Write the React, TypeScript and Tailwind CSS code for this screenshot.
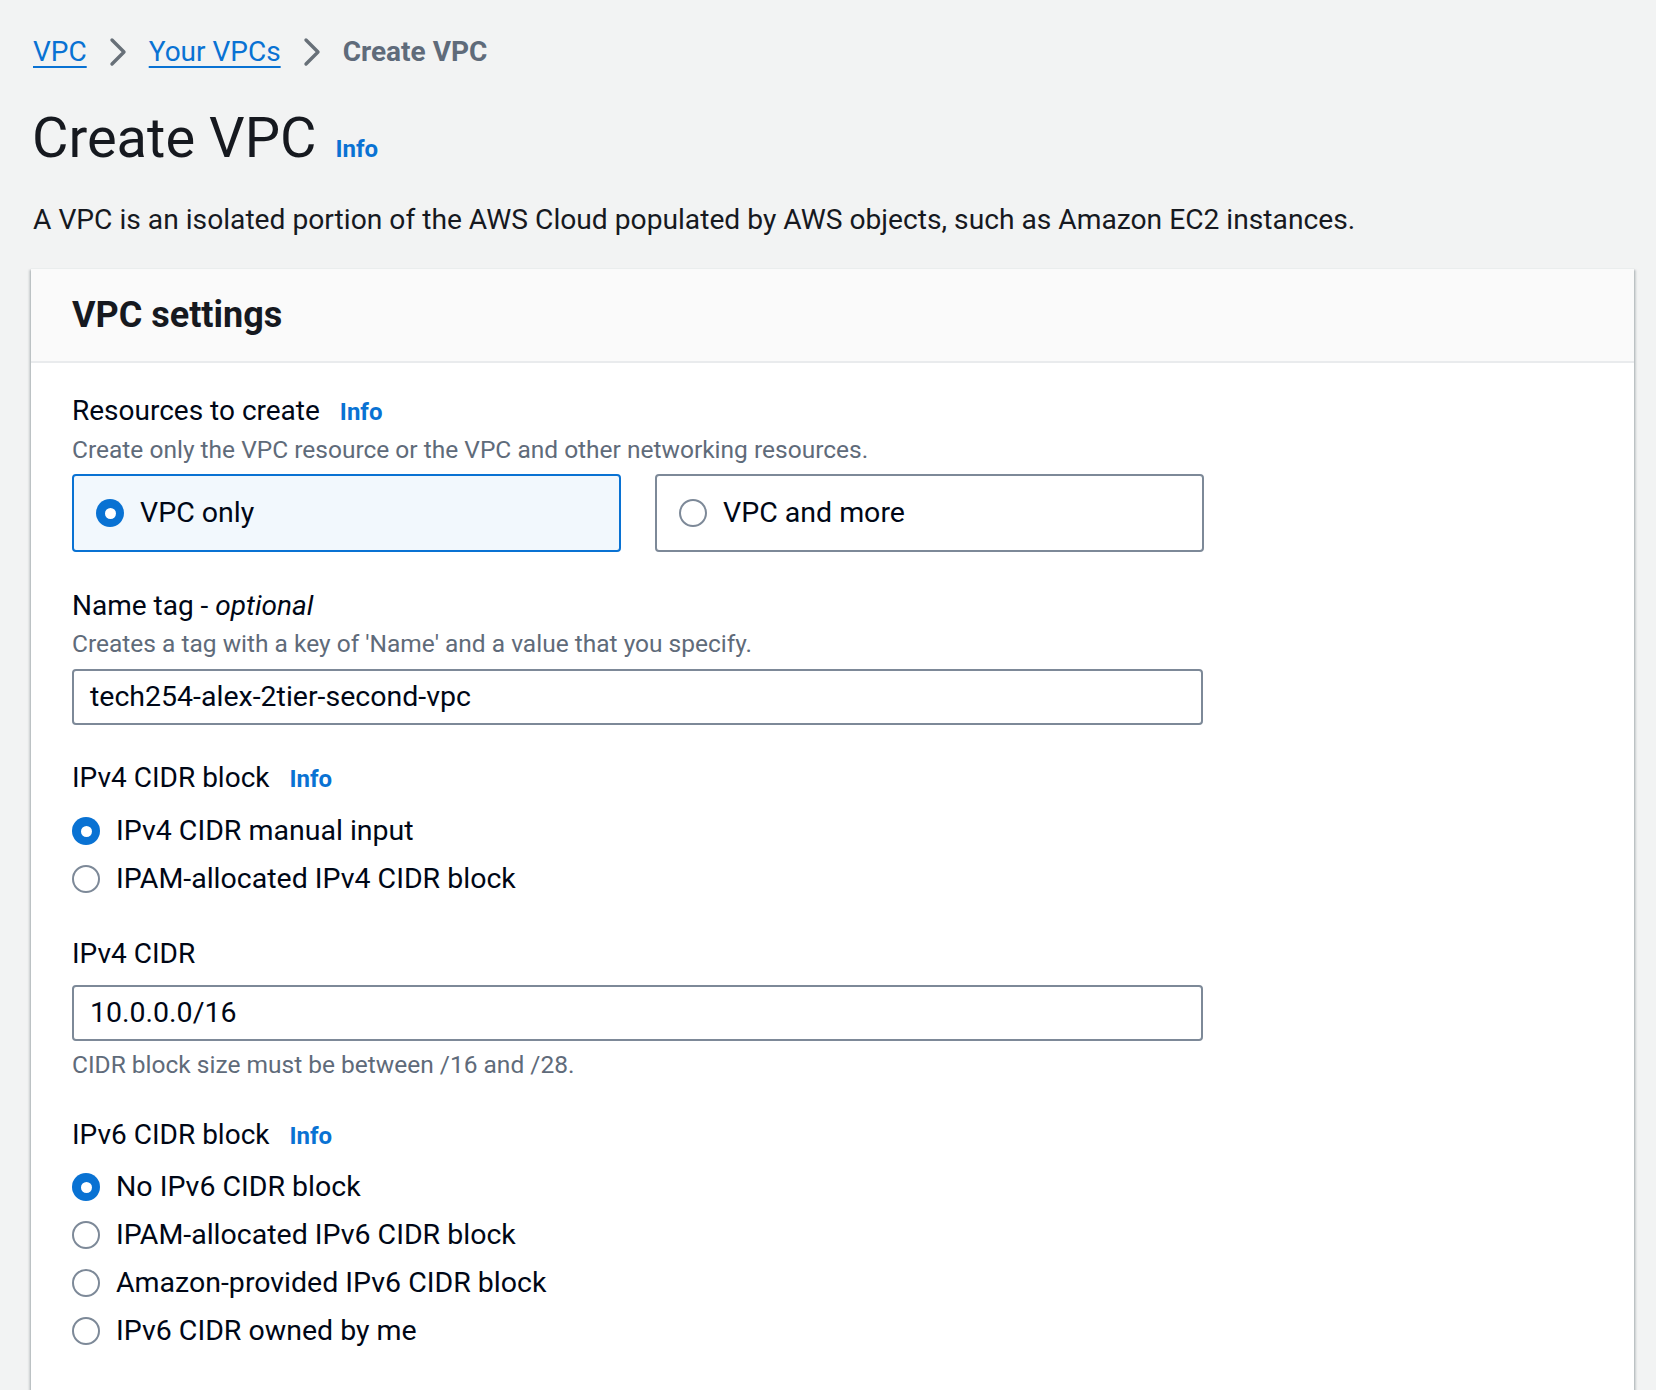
import React from "react";

function Chevron() {
  return (
    <svg width="20" height="30" viewBox="0 0 20 30" className="mx-[21px] shrink-0" aria-hidden>
      <path d="M4 3 L16 15 L4 27" fill="none" stroke="#687078" strokeWidth="3.4" strokeLinecap="round" strokeLinejoin="round" />
    </svg>
  );
}

function Radio({ checked }: { checked?: boolean }) {
  return checked ? (
    <span className="flex h-[28px] w-[28px] shrink-0 items-center justify-center rounded-full bg-[#0972d3]">
      <span className="h-[11px] w-[11px] rounded-full bg-white" />
    </span>
  ) : (
    <span className="h-[28px] w-[28px] shrink-0 rounded-full border-2 border-[#7d8998] bg-white" />
  );
}

function Info() {
  return <span className="text-[24px] font-bold text-[#0972d3]">Info</span>;
}

function RadioRow({ label, checked }: { label: string; checked?: boolean }) {
  return (
    <div className="flex h-[48px] items-center gap-[16px]">
      <Radio checked={checked} />
      <span className="text-[28.5px] leading-[36px]">{label}</span>
    </div>
  );
}

function Label({ children }: { children: React.ReactNode }) {
  return <div className="flex items-baseline gap-[20px] text-[28px] leading-[36px]">{children}</div>;
}

function Desc({ children }: { children: React.ReactNode }) {
  return <div className="text-[24.5px] leading-[30px] text-[#5f6b7a]">{children}</div>;
}

function TextInput({ value }: { value: string }) {
  return (
    <div className="flex h-[56px] w-[1131px] items-center rounded-[4px] border-2 border-[#7d8998] bg-white pl-[16px] text-[28.5px]">
      {value}
    </div>
  );
}

export default function App() {
  return (
    <div className="min-h-screen overflow-hidden bg-[#f2f3f3] font-[Roboto,sans-serif] text-[#000716]">
      {/* breadcrumbs */}
      <nav className="flex items-center pl-[33px] pt-[34px] text-[28px] leading-[36px]">
        <a className="text-[#0972d3] underline decoration-[1.5px] underline-offset-[5px]">VPC</a>
        <Chevron />
        <a className="text-[#0972d3] underline decoration-[1.5px] underline-offset-[5px]">Your VPCs</a>
        <Chevron />
        <span className="font-bold text-[#5f6b7a]">Create VPC</span>
      </nav>

      <div className="mt-[36px] flex items-baseline gap-[19px] pl-[32px]">
        <h1 className="text-[56px] font-normal leading-[64px] text-[#16191f]">Create VPC</h1>
        <Info />
      </div>

      <p className="mt-[32px] pl-[33px] text-[28.2px] leading-[36px] text-[#16191f]">
        A VPC is an isolated portion of the AWS Cloud populated by AWS objects, such as Amazon EC2 instances.
      </p>

      {/* container */}
      <section className="mt-[30px] ml-[31px] mr-[22px] border-t border-[#eaeded] bg-white shadow-[0_2px_2px_0_rgba(0,28,36,0.3),2px_2px_2px_0_rgba(0,28,36,0.15),-2px_2px_2px_0_rgba(0,28,36,0.15)]">
        <header className="flex h-[94px] items-center border-b-2 border-[#e9ebed] bg-[#fafafa] pl-[41px]">
          <h2 className="text-[36px] font-bold leading-[44px] text-[#16191f]">VPC settings</h2>
        </header>

        <div className="flex flex-col pb-[120px] pl-[41px] pt-[30px]">
          <Label>
            <span>Resources to create</span>
            <Info />
          </Label>
          <div className="mt-[5px]">
            <Desc>Create only the VPC resource or the VPC and other networking resources.</Desc>
          </div>
          <div className="mt-[9px] flex gap-[34px]">
            <div className="flex h-[78px] w-[549px] items-center gap-[16px] rounded-[4px] border-2 border-[#0972d3] bg-[#f2f8fd] pl-[22px]">
              <Radio checked />
              <span className="text-[28.5px]">VPC only</span>
            </div>
            <div className="flex h-[78px] w-[549px] items-center gap-[16px] rounded-[4px] border-2 border-[#7d8998] bg-white pl-[22px]">
              <Radio />
              <span className="text-[28.5px]">VPC and more</span>
            </div>
          </div>

          <div className="mt-[36px]">
            <Label>
              <span>
                Name tag - <i>optional</i>
              </span>
            </Label>
          </div>
          <div className="mt-[5px]">
            <Desc>Creates a tag with a key of 'Name' and a value that you specify.</Desc>
          </div>
          <div className="mt-[10px]">
            <TextInput value="tech254-alex-2tier-second-vpc" />
          </div>

          <div className="mt-[35px]">
            <Label>
              <span>IPv4 CIDR block</span>
              <Info />
            </Label>
          </div>
          <div className="mt-[10px]">
            <RadioRow label="IPv4 CIDR manual input" checked />
            <RadioRow label="IPAM-allocated IPv4 CIDR block" />
          </div>

          <div className="mt-[33px]">
            <Label>
              <span>IPv4 CIDR</span>
            </Label>
          </div>
          <div className="mt-[13px]">
            <TextInput value="10.0.0.0/16" />
          </div>
          <div className="mt-[9px]">
            <Desc>CIDR block size must be between /16 and /28.</Desc>
          </div>

          <div className="mt-[37px]">
            <Label>
              <span>IPv6 CIDR block</span>
              <Info />
            </Label>
          </div>
          <div className="mt-[9px]">
            <RadioRow label="No IPv6 CIDR block" checked />
            <RadioRow label="IPAM-allocated IPv6 CIDR block" />
            <RadioRow label="Amazon-provided IPv6 CIDR block" />
            <RadioRow label="IPv6 CIDR owned by me" />
          </div>
        </div>
      </section>
    </div>
  );
}
